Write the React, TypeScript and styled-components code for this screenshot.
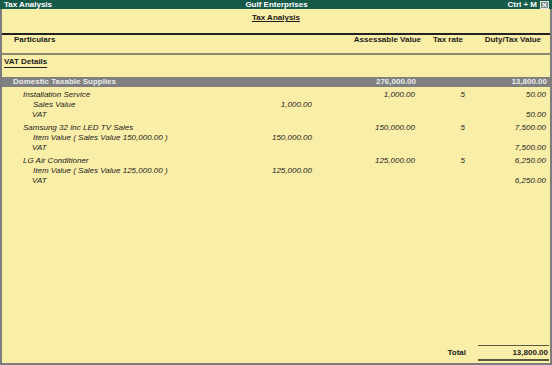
import React from 'react';
import styled, { createGlobalStyle } from 'styled-components';

const Global = createGlobalStyle`
  html, body { margin: 0; padding: 0; background: #f9eea8; }
  body { font-family: "Liberation Sans", Arial, sans-serif; overflow: hidden; }
`;

const Window = styled.div`
  width: 552px;
  height: 365px;
  display: flex;
  flex-direction: column;
  background: #f9eea8;
  color: #1b1b1b;
  font-size: 8px;
`;

const TitleBar = styled.div`
  height: 9px;
  flex: none;
  background: #165a4a;
  color: #ffffff;
  font-weight: bold;
  font-size: 8px;
  line-height: 9px;
  display: grid;
  grid-template-columns: 1fr auto 1fr;
  align-items: center;
  padding: 0 3px 0 4px;
`;

const TitleRight = styled.div`
  justify-self: end;
  display: flex;
  align-items: center;
  gap: 3px;
`;

const Body = styled.div`
  flex: 1;
  display: flex;
  flex-direction: column;
  border-left: 2px solid #7c7c7c;
  border-right: 2px solid #7c7c7c;
  border-bottom: 2px solid #7c7c7c;
`;

const ReportTitle = styled.div`
  text-align: center;
  font-weight: bold;
  line-height: 10px;
  padding-top: 4px;
  margin-bottom: 10px;
  text-decoration: underline;
  text-underline-offset: 1px;
`;

const HeaderRow = styled.div`
  display: grid;
  grid-template-columns: 1fr 112px 42px 78px;
  padding: 0 9px 8px 0;
  border-top: 2px solid #222;
  border-bottom: 2px solid #8e8a6e;
  font-weight: bold;
  line-height: 10px;
`;

const HeadCell = styled.div<{ $align?: string; $indent?: number }>`
  text-align: ${(p) => p.$align || 'left'};
  padding-left: ${(p) => p.$indent || 0}px;
`;

const SectionTitle = styled.div`
  align-self: flex-start;
  margin: 2px 0 9px 2px;
  font-weight: bold;
  line-height: 10px;
  border-bottom: 1px solid #222;
`;

const Band = styled.div`
  display: grid;
  grid-template-columns: 1fr 80px 104px 50px 80px;
  padding-right: 3px;
  height: 10px;
  line-height: 10px;
  background: #808080;
  color: #ececec;
  font-weight: bold;
`;

const Group = styled.div`
  margin-top: 3px;
`;

const Row = styled.div`
  display: grid;
  grid-template-columns: 1fr 80px 104px 50px 80px;
  padding-right: 3px;
  height: 10px;
  line-height: 10px;
  font-style: italic;
`;

const Cell = styled.div<{ $align?: string; $indent?: number; $pad?: number }>`
  text-align: ${(p) => p.$align || 'right'};
  padding-left: ${(p) => p.$indent || 0}px;
  padding-right: ${(p) => p.$pad || 0}px;
  white-space: nowrap;
`;

const Spacer = styled.div`
  flex: 1;
`;

const TotalRow = styled.div`
  display: flex;
  justify-content: flex-end;
  align-items: center;
  padding-right: 1px;
  margin-bottom: 2px;
`;

const TotalLabel = styled.div`
  font-weight: bold;
  margin-right: 12px;
  line-height: 10px;
`;

const TotalValue = styled.div`
  width: 70px;
  text-align: right;
  font-weight: bold;
  line-height: 10px;
  padding: 2px 1px 1px 0;
  border-top: 1px solid #5a5740;
  border-bottom: 2px solid #5a5740;
`;

const CloseIcon = () => (
  <svg width="9" height="8" viewBox="0 0 9 8">
    <rect x="0.5" y="0.5" width="8" height="7" fill="#6f8a82" stroke="#e6e6e6" />
    <path d="M2.5 2 L6.5 6 M6.5 2 L2.5 6" stroke="#f2f2f2" strokeWidth="1.1" />
  </svg>
);

type Item = {
  name: string;
  assess: string;
  duty: string;
  subLabel: string;
  subValue: string;
};

const items: Item[] = [
  { name: 'Installation Service', assess: '1,000.00', duty: '50.00', subLabel: 'Sales Value', subValue: '1,000.00' },
  { name: 'Samsung 32 Inc LED TV Sales', assess: '150,000.00', duty: '7,500.00', subLabel: 'Item Value ( Sales Value 150,000.00 )', subValue: '150,000.00' },
  { name: 'LG Air Conditioner', assess: '125,000.00', duty: '6,250.00', subLabel: 'Item Value ( Sales Value 125,000.00 )', subValue: '125,000.00' },
];

export default function App() {
  return (
    <>
      <Global />
      <Window>
        <TitleBar>
          <span>Tax Analysis</span>
          <span>Gulf Enterprises</span>
          <TitleRight>
            <span>Ctrl + M</span>
            <CloseIcon />
          </TitleRight>
        </TitleBar>
        <Body>
          <ReportTitle>Tax Analysis</ReportTitle>
          <HeaderRow>
            <HeadCell $indent={12}>Particulars</HeadCell>
            <HeadCell $align="right">Assessable Value</HeadCell>
            <HeadCell $align="right">Tax rate</HeadCell>
            <HeadCell $align="right">Duty/Tax Value</HeadCell>
          </HeaderRow>
          <SectionTitle>VAT Details</SectionTitle>
          <Band>
            <Cell $align="left" $indent={11}>Domestic Taxable Supplies</Cell>
            <Cell />
            <Cell $pad={1}>276,000.00</Cell>
            <Cell />
            <Cell>13,800.00</Cell>
          </Band>
          {items.map((it) => (
            <Group key={it.name}>
              <Row>
                <Cell $align="left" $indent={21}>{it.name}</Cell>
                <Cell />
                <Cell $pad={2}>{it.assess}</Cell>
                <Cell $pad={2}>5</Cell>
                <Cell $pad={1}>{it.duty}</Cell>
              </Row>
              <Row>
                <Cell $align="left" $indent={31}>{it.subLabel}</Cell>
                <Cell $pad={1}>{it.subValue}</Cell>
                <Cell />
                <Cell />
                <Cell />
              </Row>
              <Row>
                <Cell $align="left" $indent={30}>VAT</Cell>
                <Cell />
                <Cell />
                <Cell />
                <Cell $pad={1}>{it.duty}</Cell>
              </Row>
            </Group>
          ))}
          <Spacer />
          <TotalRow>
            <TotalLabel>Total</TotalLabel>
            <TotalValue>13,800.00</TotalValue>
          </TotalRow>
        </Body>
      </Window>
    </>
  );
}
